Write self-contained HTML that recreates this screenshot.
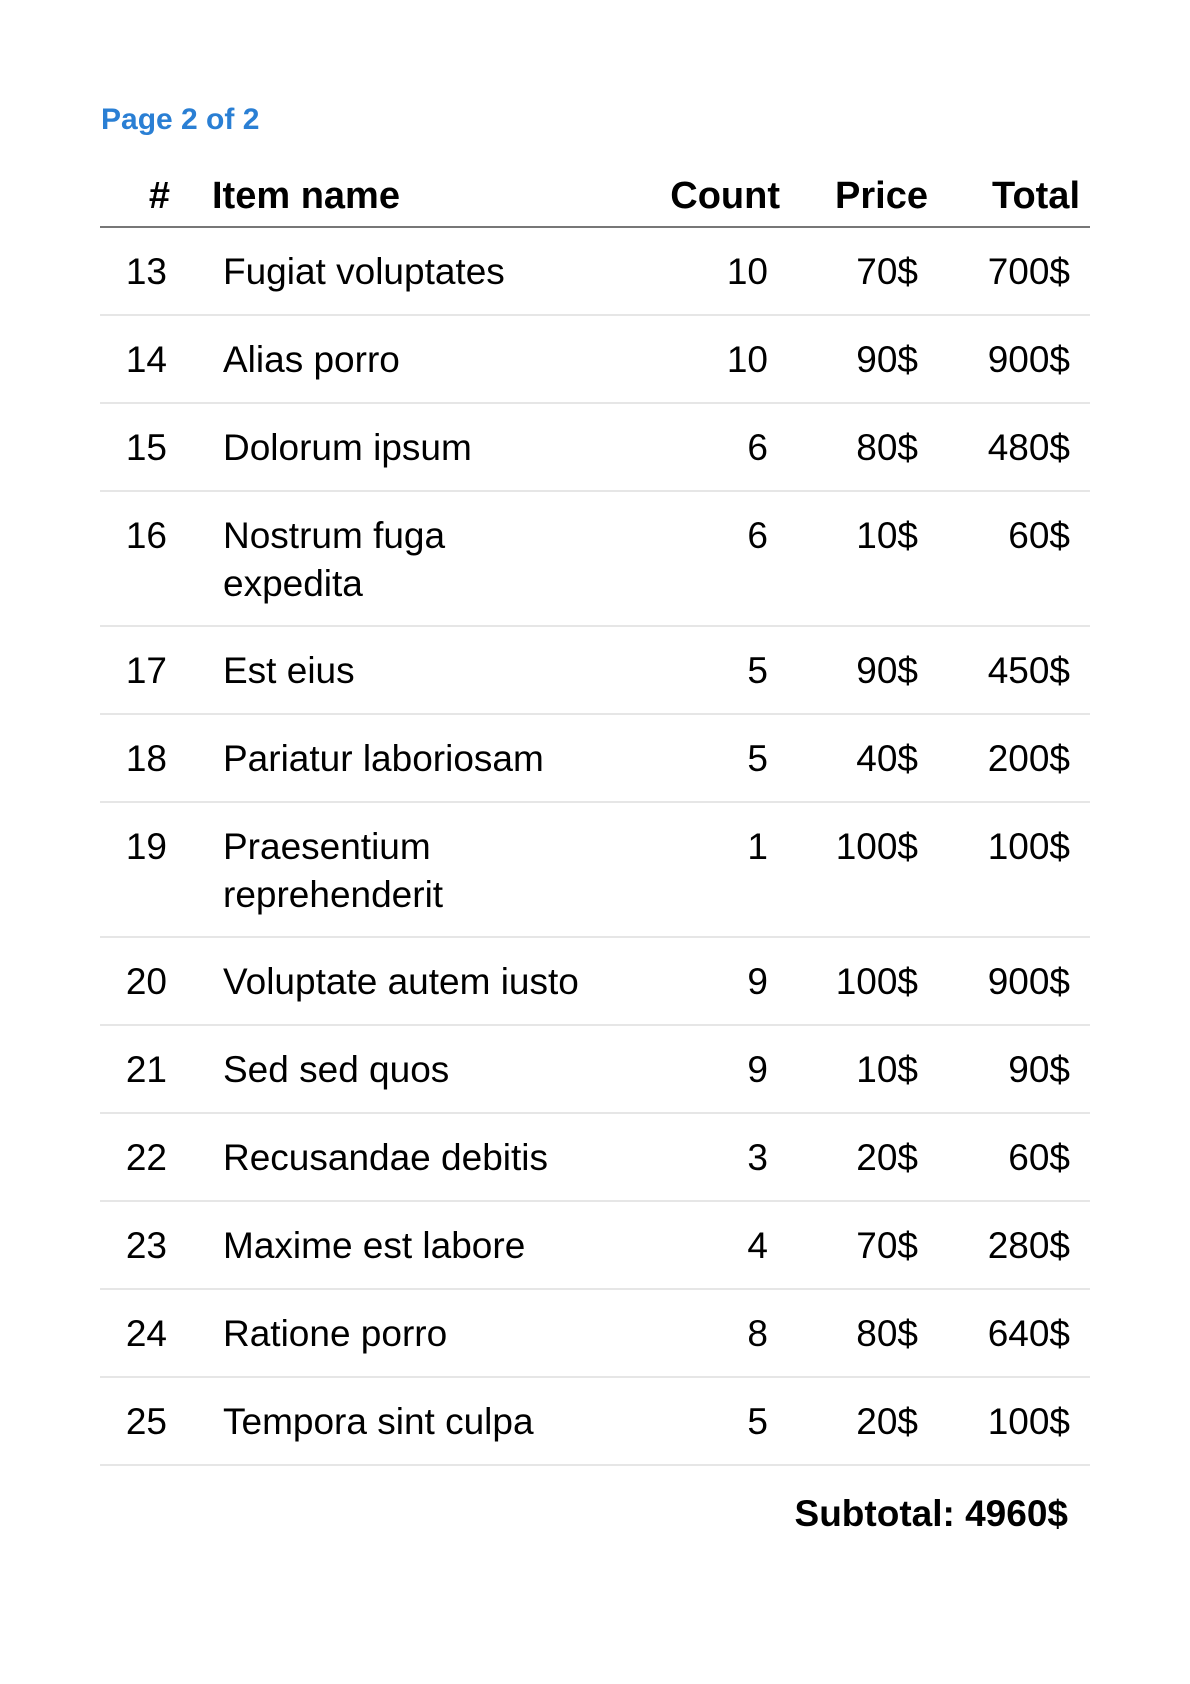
<!DOCTYPE html>
<html><head><meta charset="utf-8"><style>
*{margin:0;padding:0;box-sizing:border-box}
body{width:1190px;height:1684px;background:#fff;font-family:"Liberation Sans",sans-serif;color:#000;position:relative;overflow:hidden}
.page{position:absolute;left:101px;top:102px;font-size:30px;font-weight:bold;color:#2a7fd4;line-height:36px}
.hdr{position:absolute;left:100px;top:172px;width:990px;height:56px;border-bottom:2px solid #777;font-size:38px;font-weight:bold;line-height:48px}
.tbl{position:absolute;left:100px;top:228px;width:990px}
.row{position:relative;height:88px;border-bottom:2px solid #e6e6e6;font-size:37px;line-height:48px}
.row.d{height:135px}
.row span,.hdr span{position:absolute;top:20px;white-space:nowrap}
.hdr span{top:0}
.n{right:calc(990px - 67px)}
.nm{left:123px}
.c{right:222px}.p{right:172px}.t{right:20px}
.hdr .n{right:calc(990px - 70px)}.hdr .nm{left:112px}.hdr .c{right:210px}.hdr .p{right:162px}.hdr .t{right:10px}
.sub{position:absolute;right:122px;top:1490px;font-size:37px;font-weight:bold;line-height:48px}
</style></head><body>
<div class="page">Page 2 of 2</div>
<div class="hdr"><span class="n">#</span><span class="nm">Item name</span><span class="c" style="right:310px">Count</span><span class="p" style="right:162px">Price</span><span class="t">Total</span></div>
<div class="tbl">
<div class="row"><span class="n">13</span><span class="nm">Fugiat voluptates</span><span class="c" style="right:322px">10</span><span class="p">70$</span><span class="t">700$</span></div>
<div class="row"><span class="n">14</span><span class="nm">Alias porro</span><span class="c" style="right:322px">10</span><span class="p">90$</span><span class="t">900$</span></div>
<div class="row"><span class="n">15</span><span class="nm">Dolorum ipsum</span><span class="c" style="right:322px">6</span><span class="p">80$</span><span class="t">480$</span></div>
<div class="row d"><span class="n">16</span><span class="nm">Nostrum fuga<br>expedita</span><span class="c" style="right:322px">6</span><span class="p">10$</span><span class="t">60$</span></div>
<div class="row"><span class="n">17</span><span class="nm">Est eius</span><span class="c" style="right:322px">5</span><span class="p">90$</span><span class="t">450$</span></div>
<div class="row"><span class="n">18</span><span class="nm">Pariatur laboriosam</span><span class="c" style="right:322px">5</span><span class="p">40$</span><span class="t">200$</span></div>
<div class="row d"><span class="n">19</span><span class="nm">Praesentium<br>reprehenderit</span><span class="c" style="right:322px">1</span><span class="p">100$</span><span class="t">100$</span></div>
<div class="row"><span class="n">20</span><span class="nm">Voluptate autem iusto</span><span class="c" style="right:322px">9</span><span class="p">100$</span><span class="t">900$</span></div>
<div class="row"><span class="n">21</span><span class="nm">Sed sed quos</span><span class="c" style="right:322px">9</span><span class="p">10$</span><span class="t">90$</span></div>
<div class="row"><span class="n">22</span><span class="nm">Recusandae debitis</span><span class="c" style="right:322px">3</span><span class="p">20$</span><span class="t">60$</span></div>
<div class="row"><span class="n">23</span><span class="nm">Maxime est labore</span><span class="c" style="right:322px">4</span><span class="p">70$</span><span class="t">280$</span></div>
<div class="row"><span class="n">24</span><span class="nm">Ratione porro</span><span class="c" style="right:322px">8</span><span class="p">80$</span><span class="t">640$</span></div>
<div class="row"><span class="n">25</span><span class="nm">Tempora sint culpa</span><span class="c" style="right:322px">5</span><span class="p">20$</span><span class="t">100$</span></div>
</div>
<div class="sub">Subtotal: 4960$</div>
</body></html>
